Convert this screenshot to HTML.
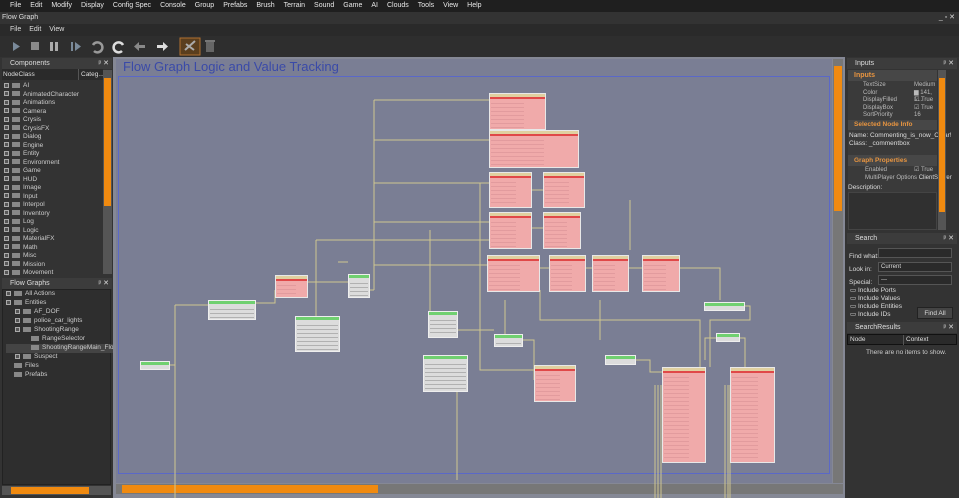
<!DOCTYPE html>
<html><head><meta charset="utf-8"><style>
*{margin:0;padding:0;box-sizing:border-box}
body{width:959px;height:498px;background:#2b2b2b;font-family:"Liberation Sans",sans-serif;font-size:7px;color:#ddd;position:relative;overflow:hidden}
.a{position:absolute}
.menu{left:0;top:0;width:959px;height:12px;background:#1f1f1f;font-size:7px;line-height:12px;color:#e8e8e8;white-space:nowrap}
.menu span{margin-left:9px}
.hdr{background:#3c3c3c;color:#ddd;font-size:7px;line-height:11px;padding-left:8px}
.n{position:absolute;background:#f0aaaa;border:1px solid #e8e8e8;overflow:hidden}
.n:before{content:"";position:absolute;left:0;top:0;right:0;height:3px;background:#e0d0a0}
.n:after{content:"";position:absolute;left:0;top:3px;right:0;height:2px;background:#e04848}
.n i{position:absolute;left:1px;top:6px;width:60%;bottom:1px;background:repeating-linear-gradient(#f0aaaa 0 3px,#c07880 3px 4px);opacity:.3}
.w{position:absolute;background:#dcdcdc;border:1px solid #eee;overflow:hidden}
.w:before{content:"";position:absolute;left:0;top:0;right:0;height:3px;background:#70d070}
.w i{position:absolute;left:1px;top:5px;right:1px;bottom:1px;background:repeating-linear-gradient(#dcdcdc 0 3px,#707070 3px 4px);opacity:.4}
.tree div{height:8.5px;line-height:8.5px;white-space:nowrap}
.sq{display:inline-block;width:5px;height:5px;border:1px solid #aaa;margin-right:3px;vertical-align:middle;background:#555}
.fd{display:inline-block;width:8px;height:5px;background:#888;margin-right:3px;vertical-align:middle}
.prop{font-size:6px;line-height:7.5px}
</style></head><body>
<div class="a menu"><span style="margin-left:10px">File</span><span>Edit</span><span>Modify</span><span>Display</span><span>Config Spec</span><span>Console</span><span>Group</span><span>Prefabs</span><span>Brush</span><span>Terrain</span><span>Sound</span><span>Game</span><span>AI</span><span>Clouds</span><span>Tools</span><span>View</span><span>Help</span></div>
<div class="a" style="left:0;top:12px;width:959px;height:12px;background:#333;line-height:12px;padding-left:2px">Flow Graph<span class="a" style="right:4px;top:0;font-size:7px">_ ▫ ✕</span></div>
<div class="a" style="left:0;top:24px;width:959px;height:12px;background:#2a2a2a;line-height:12px;padding-left:10px;word-spacing:6px">File Edit View</div>
<div class="a" style="left:0;top:36px;width:959px;height:21px;background:#2e2e2e"></div>
<svg class="a" style="left:0;top:36px" width="240" height="21">
<polygon points="13,6 13,15 20,10.5" fill="#7a8a9a"/><rect x="31" y="6" width="8" height="8" fill="#8a8a8a"/><rect x="50" y="6" width="3" height="9" fill="#aaa"/><rect x="55" y="6" width="3" height="9" fill="#aaa"/>
<rect x="71" y="6" width="2" height="9" fill="#7a8a9a"/><polygon points="75,6 75,15 81,10.5" fill="#7a8a9a"/>
<path d="M93 9 a5 5 0 1 1 1 6" stroke="#999" stroke-width="2.5" fill="none"/><path d="M123 9 a5 5 0 1 0 -1 6" stroke="#ddd" stroke-width="2.5" fill="none"/>
<polygon points="134,10.5 139,6 139,15" fill="#888"/><rect x="139" y="9" width="6" height="3" fill="#888"/><polygon points="168,10.5 163,6 163,15" fill="#ddd"/><rect x="157" y="9" width="6" height="3" fill="#ddd"/>
<rect x="180" y="2" width="20" height="17" fill="#5a3e1e" stroke="#b07030"/><path d="M185 14 l10 -9 M186 8 l8 6" stroke="#aaa" stroke-width="2"/>
<rect x="206" y="6" width="8" height="10" fill="#666"/><rect x="205" y="4" width="10" height="2" fill="#777"/>
</svg>
<div class="a" style="left:0;top:57px;width:113px;height:441px;background:#333"></div>
<div class="a hdr" style="left:2px;top:58px;width:110px;height:11px">Components<span class="a" style="right:3px">ᵖ ✕</span></div>
<div class="a" style="left:2px;top:69px;width:101px;height:11px;background:#2a2a2a;line-height:11px;font-size:6.5px;padding-left:1px">NodeClass<span class="a" style="left:76px;border-left:1px solid #555;padding-left:2px">Categ...</span></div>
<div class="a tree" style="left:4px;top:82px;width:99px;font-size:6.5px;color:#ccc">
<div><span class="sq"></span><span class="fd"></span>AI</div><div><span class="sq"></span><span class="fd"></span>AnimatedCharacter</div><div><span class="sq"></span><span class="fd"></span>Animations</div><div><span class="sq"></span><span class="fd"></span>Camera</div><div><span class="sq"></span><span class="fd"></span>Crysis</div><div><span class="sq"></span><span class="fd"></span>CrysisFX</div><div><span class="sq"></span><span class="fd"></span>Dialog</div><div><span class="sq"></span><span class="fd"></span>Engine</div><div><span class="sq"></span><span class="fd"></span>Entity</div><div><span class="sq"></span><span class="fd"></span>Environment</div><div><span class="sq"></span><span class="fd"></span>Game</div><div><span class="sq"></span><span class="fd"></span>HUD</div><div><span class="sq"></span><span class="fd"></span>Image</div><div><span class="sq"></span><span class="fd"></span>Input</div><div><span class="sq"></span><span class="fd"></span>Interpol</div><div><span class="sq"></span><span class="fd"></span>Inventory</div><div><span class="sq"></span><span class="fd"></span>Log</div><div><span class="sq"></span><span class="fd"></span>Logic</div><div><span class="sq"></span><span class="fd"></span>MaterialFX</div><div><span class="sq"></span><span class="fd"></span>Math</div><div><span class="sq"></span><span class="fd"></span>Misc</div><div><span class="sq"></span><span class="fd"></span>Mission</div><div><span class="sq"></span><span class="fd"></span>Movement</div>
</div>
<div class="a" style="left:103px;top:70px;width:9px;height:204px;background:#555"></div>
<div class="a" style="left:104px;top:78px;width:7px;height:128px;background:#f08a10"></div>
<div class="a hdr" style="left:2px;top:278px;width:110px;height:11px">Flow Graphs<span class="a" style="right:3px">ᵖ ✕</span></div>
<div class="a" style="left:2px;top:289px;width:109px;height:196px;background:#2e2e2e;border:1px solid #222"></div>
<div class="a tree" style="left:6px;top:290px;font-size:6.5px;color:#ccc">
<div style="height:9px"><span class="sq"></span><span class="fd"></span>All Actions</div>
<div style="height:9px"><span class="sq"></span><span class="fd"></span>Entities</div>
<div style="height:9px;padding-left:9px"><span class="sq"></span><span class="fd"></span>AF_DOF</div>
<div style="height:9px;padding-left:9px"><span class="sq"></span><span class="fd"></span>police_car_lights</div>
<div style="height:9px;padding-left:9px"><span class="sq"></span><span class="fd"></span>ShootingRange</div>
<div style="height:9px;padding-left:25px"><span class="fd"></span>RangeSelector</div>
<div style="height:9px;padding-left:25px;background:#444"><span class="fd"></span>ShootingRangeMain_Flow</div>
<div style="height:9px;padding-left:9px"><span class="sq"></span><span class="fd"></span>Suspect</div>
<div style="height:9px;padding-left:8px"><span class="fd"></span>Files</div>
<div style="height:9px;padding-left:8px"><span class="fd"></span>Prefabs</div>
</div>
<div class="a" style="left:2px;top:486px;width:109px;height:9px;background:#555"></div>
<div class="a" style="left:11px;top:487px;width:78px;height:7px;background:#f08a10"></div>
<div class="a" style="left:113px;top:57px;width:732px;height:441px;background:#858895"></div>
<div class="a" style="left:116px;top:59px;width:716px;height:424px;background:#7a7e94"></div>
<div class="a" style="left:118px;top:76px;width:712px;height:398px;border:1px solid #5a68c8"></div>
<div class="a" style="left:123px;top:59px;font-size:13px;color:#3a4aa8;white-space:nowrap">Flow Graph Logic and Value Tracking</div>
<div class="a" style="left:833px;top:59px;width:10px;height:424px;background:#777"></div>
<div class="a" style="left:834px;top:66px;width:8px;height:145px;background:#f08a10"></div>
<div class="a" style="left:116px;top:484px;width:727px;height:10px;background:#777"></div>
<div class="a" style="left:122px;top:485px;width:256px;height:8px;background:#f08a10"></div>
<svg class="a" style="left:0;top:0" width="959" height="498" fill="none" stroke="#cfc690" stroke-width="1">
<path d="M374 100V290M374 100H489M374 140H489M374 183H489M374 222H489M374 265H487M374 290H370"/>
<path d="M175 305V498M175 305H208M140 365H175M256 303H275V290M308 282H348"/>
<path d="M316 240V316M316 240H489M338 262H348"/>
<path d="M430 230V330M480 183V370H534M532 190H543M532 228H543M540 268H549M586 268H592M629 268H642"/>
<path d="M505 300V340M458 330H494M523 340H534V380"/>
<path d="M540 290V320H700V367M680 268H720V300M745 306H750V320H710V367"/>
<path d="M716 338H705V360M740 338H745V380H775"/>
<path d="M636 360H650V372H662M655 385V498M658 385V498M661 385V498M725 385V498M728 385V498M730 385V498"/>
<path d="M457 370V480M600 300V340M630 200V250"/>
</svg>
<div class="n" style="left:489px;top:93px;width:57px;height:37px"><i></i></div>
<div class="n" style="left:489px;top:130px;width:90px;height:38px"><i></i></div>
<div class="n" style="left:489px;top:172px;width:43px;height:36px"><i></i></div>
<div class="n" style="left:543px;top:172px;width:42px;height:36px"><i></i></div>
<div class="n" style="left:489px;top:212px;width:43px;height:37px"><i></i></div>
<div class="n" style="left:543px;top:212px;width:38px;height:37px"><i></i></div>
<div class="n" style="left:487px;top:255px;width:53px;height:37px"><i></i></div>
<div class="n" style="left:549px;top:255px;width:37px;height:37px"><i></i></div>
<div class="n" style="left:592px;top:255px;width:37px;height:37px"><i></i></div>
<div class="n" style="left:642px;top:255px;width:38px;height:37px"><i></i></div>
<div class="n" style="left:275px;top:275px;width:33px;height:23px"><i></i></div>
<div class="n" style="left:534px;top:365px;width:42px;height:37px"><i></i></div>
<div class="n" style="left:662px;top:367px;width:44px;height:96px"><i></i></div>
<div class="n" style="left:730px;top:367px;width:45px;height:96px"><i></i></div>
<div class="w" style="left:208px;top:300px;width:48px;height:20px"><i></i></div>
<div class="w" style="left:295px;top:316px;width:45px;height:36px"><i></i></div>
<div class="w" style="left:348px;top:274px;width:22px;height:24px"><i></i></div>
<div class="w" style="left:428px;top:311px;width:30px;height:27px"><i></i></div>
<div class="w" style="left:494px;top:334px;width:29px;height:13px"><i></i></div>
<div class="w" style="left:423px;top:355px;width:45px;height:37px"><i></i></div>
<div class="w" style="left:704px;top:302px;width:41px;height:9px"><i></i></div>
<div class="w" style="left:716px;top:333px;width:24px;height:9px"><i></i></div>
<div class="w" style="left:605px;top:355px;width:31px;height:10px"><i></i></div>
<div class="w" style="left:140px;top:361px;width:30px;height:9px"><i></i></div>
<div class="a" style="left:845px;top:57px;width:114px;height:441px;background:#333"></div>
<div class="a hdr" style="left:847px;top:58px;width:110px;height:11px">Inputs<span class="a" style="right:3px">ᵖ ✕</span></div>
<div class="a" style="left:848px;top:70px;width:89px;height:160px;background:#3a3a3a"></div>
<div class="a" style="left:848px;top:70px;width:89px;height:11px;background:#474747;color:#e89540;font-weight:bold;line-height:11px;padding-left:6px">Inputs</div>
<div class="a prop" style="left:849px;top:82px;width:88px;color:#bbb">
<div style="padding-left:14px">TextSize<span class="a" style="left:65px">Medium</span></div>
<div style="padding-left:14px">Color<span class="a" style="left:65px">▆ 141, 1...</span></div>
<div style="padding-left:14px">DisplayFilled<span class="a" style="left:65px">☑ True</span></div>
<div style="padding-left:14px">DisplayBox<span class="a" style="left:65px">☑ True</span></div>
<div style="padding-left:14px">SortPriority<span class="a" style="left:65px">16</span></div>
</div>
<div class="a" style="left:848px;top:120px;width:89px;height:10px;background:#474747;color:#e89540;font-weight:bold;line-height:10px;padding-left:6px;font-size:6.5px">Selected Node Info</div>
<div class="a" style="left:849px;top:132px;font-size:6.5px;line-height:8px;color:#ddd;white-space:nowrap">Name: Commenting_is_now_Clear!<br>Class: _commentbox</div>
<div class="a" style="left:848px;top:155px;width:89px;height:11px;background:#474747;color:#e89540;font-weight:bold;line-height:11px;padding-left:6px;font-size:6.5px">Graph Properties</div>
<div class="a prop" style="left:849px;top:167px;width:88px;color:#bbb"><div style="padding-left:16px">Enabled<span class="a" style="left:65px">☑ True</span></div><div style="padding-left:16px;white-space:nowrap">MultiPlayer Options <span style="color:#ddd">ClientServer</span></div></div>
<div class="a" style="left:848px;top:184px;font-size:6.5px;color:#ddd">Description:</div>
<div class="a" style="left:848px;top:192px;width:89px;height:38px;background:#303030;border:1px solid #444"></div>
<div class="a" style="left:938px;top:70px;width:8px;height:160px;background:#555"></div>
<div class="a" style="left:939px;top:78px;width:6px;height:134px;background:#f08a10"></div>
<div class="a hdr" style="left:847px;top:233px;width:110px;height:11px">Search<span class="a" style="right:3px">ᵖ ✕</span></div>
<div class="a" style="left:849px;top:250px;font-size:6.5px;line-height:13px;color:#ddd">Find what:<br>Look in:<br>Special:</div>
<div class="a" style="left:878px;top:248px;width:74px;height:10px;background:#2a2a2a;border:1px solid #555"></div>
<div class="a" style="left:878px;top:262px;width:74px;height:10px;background:#2a2a2a;border:1px solid #555;font-size:6px;line-height:9px;padding-left:2px">Current</div>
<div class="a" style="left:878px;top:275px;width:74px;height:10px;background:#2a2a2a;border:1px solid #555;font-size:6px;line-height:9px;padding-left:2px">---</div>
<div class="a" style="left:850px;top:287px;font-size:6.5px;line-height:8px;color:#ddd">▭ Include Ports<br>▭ Include Values<br>▭ Include Entities<br>▭ Include IDs</div>
<div class="a" style="left:917px;top:307px;width:36px;height:12px;background:#444;border:1px solid #222;font-size:6.5px;line-height:11px;text-align:center">Find All</div>
<div class="a hdr" style="left:847px;top:322px;width:110px;height:11px">SearchResults<span class="a" style="right:3px">ᵖ ✕</span></div>
<div class="a" style="left:847px;top:334px;width:110px;height:11px;background:#2a2a2a;border:1px solid #111;font-size:6.5px;line-height:10px;padding-left:2px">Node<span class="a" style="left:55px;border-left:1px solid #555;padding-left:2px">Context</span></div>
<div class="a" style="left:866px;top:349px;font-size:6.5px;color:#ccc">There are no items to show.</div>
</body></html>
